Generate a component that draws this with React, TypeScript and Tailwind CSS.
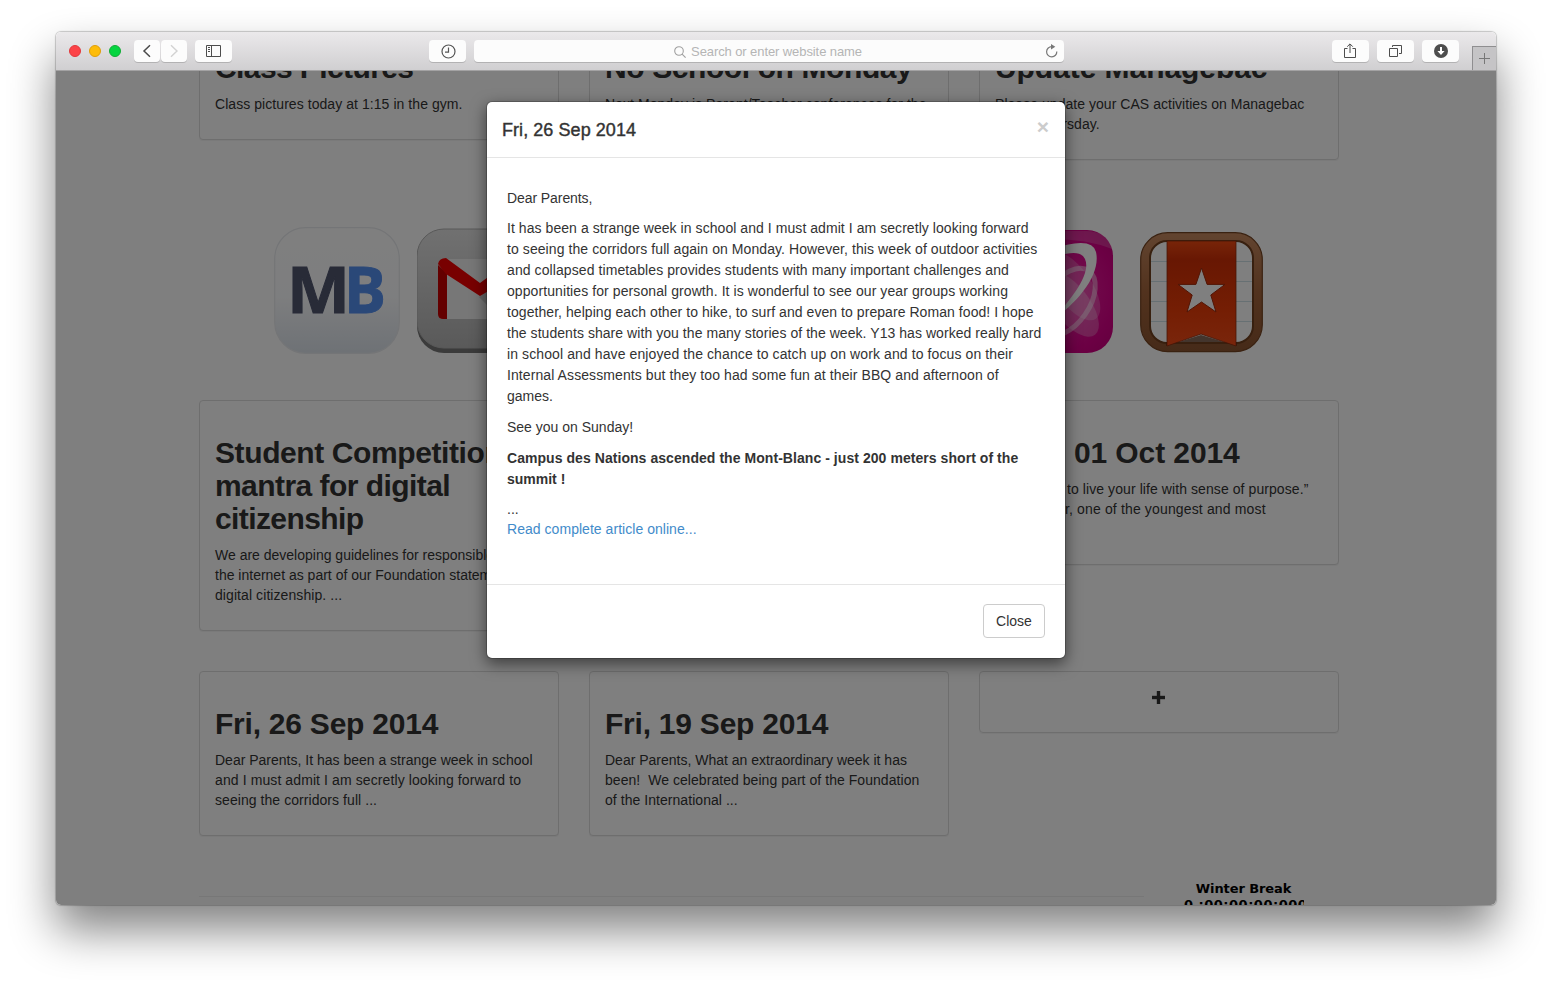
import React from "react";

type Line = { text: React.ReactNode; track?: string };
type CardProps = { title: Line[]; lines: Line[] };

function Card({ title, lines }: CardProps) {
  return (
    <article className="w-[360px] rounded-[4px] border border-[#ddd] bg-white px-[15px] pb-[25px] pt-[35px] shadow-[0_1px_1px_rgba(0,0,0,0.05)]">
      <h2 className="mb-[10px] text-[30px] font-bold leading-[33px]">
        {title.map((t, i) => (
          <span key={i} className={`block whitespace-nowrap ${t.track ?? "tracking-[-0.4px]"}`}>{t.text}</span>
        ))}
      </h2>
      <div className="text-[14px] leading-[20px]">
        {lines.map((l, i) => (
          <div key={i} className={`h-5 whitespace-pre ${l.track ?? ""}`}>{l.text}</div>
        ))}
      </div>
    </article>
  );
}

function ToolButton({ className = "", children }: { className?: string; children?: React.ReactNode }) {
  return (
    <div
      className={`flex h-[22px] shrink-0 items-center justify-center rounded-[4px] bg-[#fcfcfc] shadow-[0_1px_0_rgba(0,0,0,0.16)] ${className}`}
    >
      {children}
    </div>
  );
}

function Toolbar() {
  return (
    <header className="flex h-[39px] items-start border-b border-[#a3a2a3] bg-linear-to-b from-[#ebe9eb] to-[#d0cfd1] pl-[13px] pt-2">
      <div className="mt-[5px] flex gap-2">
        <i className="size-3 rounded-full border border-[#e2383c] bg-[#fc4348]" />
        <i className="size-3 rounded-full border border-[#e09e09] bg-[#fdbc0a]" />
        <i className="size-3 rounded-full border border-[#12ac36] bg-[#05d540]" />
      </div>
      <ToolButton className="ml-[13px] w-[26px]">
        <svg width="10" height="14" viewBox="0 0 10 14" fill="none" stroke="#4a4a4a" strokeWidth="1.5"><path d="M8 1.2 2 7l6 5.8" /></svg>
      </ToolButton>
      <ToolButton className="ml-px w-[26px]">
        <svg width="10" height="14" viewBox="0 0 10 14" fill="none" stroke="#d2d2d2" strokeWidth="1.4"><path d="M2 1.2 8 7l-6 5.8" /></svg>
      </ToolButton>
      <ToolButton className="ml-2 w-[37px]">
        <svg width="15" height="12" viewBox="0 0 15 12" fill="none" stroke="#4d4d4d"><path d="M.5.5h14v11H.5zM5.5.5v11M2 2.500h2M2 4.500h2M2 6.500h2" /></svg>
      </ToolButton>
      <ToolButton className="ml-[197px] w-[37px] pl-px">
        <svg width="15" height="15" viewBox="0 0 15 15" fill="none" stroke="#555" strokeWidth="1.2"><circle cx="7.5" cy="7.5" r="6.500" /><path d="M7.500 3.500v4.700H4" /></svg>
      </ToolButton>
      <ToolButton className="relative ml-2 w-[590px]">
        <div className="flex items-center gap-[5px] pr-[2px] pt-px text-[13px] leading-4 text-[#b5b5b5]">
          <svg width="12" height="12" viewBox="0 0 12 12" fill="none" stroke="#a0a0a0" strokeWidth="1.1"><circle cx="5" cy="5" r="4.3" /><path d="m8.1 8.1 3.5 3.5" /></svg>
          <span className="tracking-[-0.09px]">Search or enter website name</span>
        </div>
        <svg className="absolute right-[6px] top-1" width="13" height="14" viewBox="0 0 13 14" fill="none" stroke="#777" strokeWidth="1.2">
          <path d="M7 2.7a5.1 5.1 0 1 0 4.8 4.8" /><path d="M6 0v5.6l4.3-2.8z" fill="#777" stroke="none" />
        </svg>
      </ToolButton>
      <ToolButton className="ml-[268px] w-[37px]">
        <svg className="-ml-px" width="12" height="16" viewBox="0 0 12 16" fill="none" stroke="#4d4d4d"><path d="M3.5 5.5h-3v9h11v-9h-3M6 10V1M3.2 3.7 6 .9l2.8 2.8" /></svg>
      </ToolButton>
      <ToolButton className="ml-2 w-[37px]">
        <svg width="13" height="12" viewBox="0 0 13 12" fill="none" stroke="#4d4d4d"><path d="M.5 3.5h8v8h-8zM3.5 2V.5h9v8H10" /></svg>
      </ToolButton>
      <ToolButton className="ml-2 w-[37px]">
        <svg width="14" height="14" viewBox="0 0 14 14"><circle cx="7" cy="7" r="7" fill="#4d4d4d" /><path d="M6 3h2v4h2.6L7 11 3.4 7H6z" fill="#fff" /></svg>
      </ToolButton>
      <div className="ml-[13px] mt-[6px] flex h-[24px] w-[24px] items-center justify-center border-l border-t border-[#8f8e90] bg-[#c5c4c6]">
        <svg width="11" height="11" viewBox="0 0 11 11" stroke="#777"><path d="M5.5 0v11M0 5.5h11" /></svg>
      </div>
    </header>
  );
}

function ManagebacIcon() {
  return (
    <svg width="126" height="127" viewBox="0 0 126 127">
      <defs>
        <linearGradient id="mb" x1="0" y1="0" x2="0" y2="1">
          <stop offset="0" stopColor="#fff" /><stop offset=".55" stopColor="#fbfcfe" /><stop offset="1" stopColor="#dde4ec" />
        </linearGradient>
      </defs>
      <rect x=".7" y=".7" width="124.6" height="125.6" rx="31" fill="url(#mb)" stroke="#e9ebee" strokeWidth="1.2" />
      <text x="13" y="86" fontFamily="Open Sans, sans-serif" fontWeight="700" fontSize="64" textLength="63" lengthAdjust="spacingAndGlyphs" fill="#50566f" stroke="#50566f" strokeWidth="1">M</text>
      <text x="70" y="86" fontFamily="Open Sans, sans-serif" fontWeight="700" fontSize="64" textLength="42" lengthAdjust="spacingAndGlyphs" fill="#5590f0" stroke="#5590f0" strokeWidth="1">B</text>
    </svg>
  );
}

function MailIcon() {
  return (
    <svg width="126" height="127" viewBox="0 0 126 127">
      <defs>
        <linearGradient id="gm" x1="0" y1="0" x2="0" y2="1">
          <stop offset="0" stopColor="#e2e2e2" /><stop offset="1" stopColor="#b4b4b4" />
        </linearGradient>
      </defs>
      <rect y="4" width="126" height="122" rx="27" fill="#777" />
      <rect y="2" width="126" height="119" rx="27" fill="url(#gm)" stroke="#b0b0b0" />
      <path d="M23 32h80v60H23z" fill="#eee" />
      <path d="M62 70 104 36v56H84z" fill="#ccc" />
      <path d="M21 38v49q0 5 5 5h4V46z" fill="#c80000" />
      <path d="M21 37q1-6 8-6l34 25 34-25q7 0 8 6v7L63 69 29 47z" fill="#f00000" />
      <path d="M96 46v46h4q5 0 5-5V38z" fill="#c80000" />
    </svg>
  );
}

function OrbitIcon() {
  return (
    <svg width="124" height="127" viewBox="0 0 124 127">
      <defs>
        <radialGradient id="pk" cx=".5" cy=".5" r=".75">
          <stop offset="0" stopColor="#f030a8" /><stop offset=".7" stopColor="#d80088" /><stop offset="1" stopColor="#c00078" />
        </radialGradient>
      </defs>
      <rect y="3" width="124" height="123" rx="26" fill="url(#pk)" />
      <path d="M2 20Q6 4 27 4h70q22 0 26 18-25-10-60-10T2 20" fill="#fff" opacity=".18" />
      <ellipse cx="84" cy="59" rx="18" ry="40" transform="rotate(-35 84 59)" fill="#fff" opacity=".22" />
      <ellipse cx="82" cy="77" rx="39" ry="18" transform="rotate(52 82 77)" fill="#fff" opacity=".25" />
      <ellipse cx="78" cy="75" rx="38" ry="22" transform="rotate(-55 78 75)" fill="none" stroke="#fff" strokeWidth="5" opacity=".45" />
      <path d="M60 23q43-15 47 2c5 22-17 50-45 69 24-25 40-49 34-62q-5-12-36 0z" fill="#fff" />
    </svg>
  );
}

function WunderlistIcon() {
  return (
    <svg width="123" height="127" viewBox="0 0 123 127">
      <defs>
        <linearGradient id="wd" x1="0" y1="0" x2="0" y2="1">
          <stop offset="0" stopColor="#c58960" /><stop offset=".5" stopColor="#a4653c" /><stop offset="1" stopColor="#8c5531" />
        </linearGradient>
        <linearGradient id="rb" x1="0" y1="0" x2="0" y2="1">
          <stop offset="0" stopColor="#f04a12" /><stop offset=".18" stopColor="#d02f06" /><stop offset=".65" stopColor="#e93c08" /><stop offset="1" stopColor="#f44b17" />
        </linearGradient>
      </defs>
      <rect x=".7" y="5.7" width="121.6" height="119" rx="27" fill="url(#wd)" stroke="#754422" strokeWidth="1.2" />
      <rect x="10" y="14" width="103" height="102" rx="17" fill="#fff" stroke="#70401f" strokeWidth="2" />
      <path d="M11 34.5h101M11 54.5h101M11 74.5h101M11 94.5h101" stroke="#cfe0e7" />
      <path d="M26 119 61 108l36 11v-4H26z" fill="#532c15" opacity=".7" />
      <path d="M27 14h69v105L61 107l-34 12z" fill="url(#rb)" stroke="#8e2b0c" strokeWidth=".8" />
      <path d="m61.5 41 5.6 16.4H85L70.8 68l5.2 17-14.5-10L47 85l5.2-17L38 57.400h17.900z" fill="#fff" stroke="#a32b0b" strokeWidth="1" />
    </svg>
  );
}

function PageContent() {
  return (
    <main className="-mt-[56px] w-[1297px] pl-[143px] text-[#333]">
      <section className="flex h-[145px] items-start gap-[30px]">
        <Card
          title={[{ text: "Class Pictures", track: "tracking-[-0.6px]" }]}
          lines={[{ text: "Class pictures today at 1:15 in the gym.", track: "tracking-[0.06px]" }]}
        />
        <Card
          title={[{ text: "No School on Monday" }]}
          lines={[{ text: "Next Monday is Parent/Teacher conferences for the", track: "tracking-[0.05px]" }, { text: "secondary school." }]}
        />
        <Card
          title={[{ text: "Update Managebac", track: "tracking-[-0.06px]" }]}
          lines={[{ text: "Please update your CAS activities on Managebac", track: "tracking-[0.04px]" }, { text: "before Thursday." }]}
        />
      </section>
      <section className="mt-[67px] flex h-[127px] justify-between pl-[75px] pr-[90px]">
        <div className="flex gap-[17px]"><ManagebacIcon /><MailIcon /></div>
        <div className="flex gap-[27px]"><OrbitIcon /><WunderlistIcon /></div>
      </section>
      <section className="mt-[46px] flex h-[231px] items-start gap-[30px]">
        <Card
          title={[
            { text: "Student Competition:" },
            { text: "mantra for digital", track: "tracking-[-0.55px]" },
            { text: "citizenship", track: "tracking-[-0.6px]" },
          ]}
          lines={[
            { text: "We are developing guidelines for responsible use of" },
            { text: "the internet as part of our Foundation statement on" },
            { text: "digital citizenship. ...", track: "tracking-[0.08px]" },
          ]}
        />
        <div className="w-[360px]" />
        <Card
          title={[{ text: "Wed, 01 Oct 2014", track: "tracking-[-0.1px]" }]}
          lines={[
            { text: <span className="pl-[72px]">to live your life with sense of purpose.”</span>, track: "tracking-[0.08px]" },
            { text: <span className="pl-[62px]">er, one of the youngest and most</span>, track: "tracking-[0.15px]" },
            { text: "" },
          ]}
        />
      </section>
      <section className="mt-10 flex h-[165px] items-start gap-[30px]">
        <Card
          title={[{ text: "Fri, 26 Sep 2014", track: "tracking-[-0.23px]" }]}
          lines={[
            { text: "Dear Parents, It has been a strange week in school" },
            { text: "and I must admit I am secretly looking forward to", track: "tracking-[0.1px]" },
            { text: "seeing the corridors full ...", track: "tracking-[0.06px]" },
          ]}
        />
        <Card
          title={[{ text: "Fri, 19 Sep 2014", track: "tracking-[-0.23px]" }]}
          lines={[
            { text: "Dear Parents, What an extraordinary week it has" },
            { text: "been!  We celebrated being part of the Foundation", track: "tracking-[0.05px]" },
            { text: "of the International ...", track: "tracking-[0.05px]" },
          ]}
        />
        <div className="flex h-[62px] w-[360px] justify-center rounded-[4px] border border-[#ddd] pr-[2px] pt-[19px] shadow-[0_1px_1px_rgba(0,0,0,0.05)]">
          <svg width="13" height="13" viewBox="0 0 13 13" fill="#333"><path d="M5 0h3v5h5v3H8v5H5V8H0V5h5z" stroke="#333" strokeWidth=".4" /></svg>
        </div>
      </section>
      <section className="mt-[45px] flex gap-10">
        <hr className="mt-[15px] h-px w-[945px] border-0 bg-[#eee]" />
        <div className="w-[120px] overflow-hidden whitespace-nowrap text-center font-['DejaVu_Sans',sans-serif] text-[13px] font-bold leading-4 tracking-[-0.1px] text-black">
          <div className="-ml-px">Winter Break</div>
          <div className="text-left tracking-[0.5px]">0 :00:00:00:000</div>
        </div>
      </section>
    </main>
  );
}

const LETTER: Line[] = [
  { text: "It has been a strange week in school and I must admit I am secretly looking forward", track: "tracking-[0.06px]" },
  { text: "to seeing the corridors full again on Monday. However, this week of outdoor activities", track: "tracking-[0.08px]" },
  { text: "and collapsed timetables provides students with many important challenges and", track: "tracking-[0.09px]" },
  { text: "opportunities for personal growth. It is wonderful to see our year groups working", track: "tracking-[0.085px]" },
  { text: "together, helping each other to hike, to surf and even to prepare Roman food! I hope", track: "tracking-[0.06px]" },
  { text: "the students share with you the many stories of the week. Y13 has worked really hard", track: "tracking-[0.055px]" },
  { text: "in school and have enjoyed the chance to catch up on work and to focus on their", track: "tracking-[0.1px]" },
  { text: "Internal Assessments but they too had some fun at their BBQ and afternoon of", track: "tracking-[0.09px]" },
  { text: "games." },
];

function Modal() {
  return (
    <div className="absolute left-[430px] top-[30px] h-[558px] w-[580px] rounded-[6px] border border-black/20 bg-white bg-clip-padding text-[14px] text-[#333] shadow-[0_5px_15px_rgba(0,0,0,0.5)]">
      <div className="flex h-14 justify-between border-b border-[#e5e5e5] px-[15px] pt-[15px]">
        <h4 className="text-[18px] leading-[26px] tracking-[0.06px] [-webkit-text-stroke:0.4px_#333]">Fri, 26 Sep 2014</h4>
        <span className="-mt-px mr-px text-[21px] font-bold leading-[21px] text-[#ccc]">×</span>
      </div>
      <div className="h-[426px] whitespace-nowrap px-5 pt-[30px] leading-[21px]">
        <p className="mb-[10px] leading-5 tracking-[-0.08px]">Dear Parents,</p>
        <p className="mb-[10px]">
          {LETTER.map((l, i) => (
            <span key={i} className={`block ${l.track ?? ""}`}>{l.text}</span>
          ))}
        </p>
        <p className="mb-[10px]">See you on Sunday!</p>
        <p className="mb-[9px] font-bold">
          <span className="block tracking-[0.055px]">Campus des Nations ascended the Mont-Blanc - just 200 meters short of the</span>
          <span className="block">summit !</span>
        </p>
        <div className="leading-5">...</div>
        <a className="block leading-5 tracking-[0.04px] text-[#428bca]">Read complete article online...</a>
      </div>
      <div className="flex justify-end border-t border-[#e5e5e5] px-5 pt-[19px]">
        <button className="h-[34px] w-[62px] rounded-[4px] border border-[#ccc] bg-white text-[14px] leading-5">Close</button>
      </div>
    </div>
  );
}

export default function App() {
  return (
    <div className="h-[985px] w-[1552px] overflow-hidden bg-white pl-14 pt-8 font-['Liberation_Sans',Arial,sans-serif]">
      <div className="h-[873px] w-[1440px] rounded-[5px] shadow-[0_0_1px_1px_rgba(0,0,0,0.2),0_25px_46px_rgba(0,0,0,0.49)]">
        <div className="h-full overflow-hidden rounded-[5px] bg-white">
          <Toolbar />
          <div className="relative h-[834px] overflow-hidden">
            <PageContent />
            <div className="absolute inset-0 bg-black/50" />
            <Modal />
          </div>
        </div>
      </div>
    </div>
  );
}
